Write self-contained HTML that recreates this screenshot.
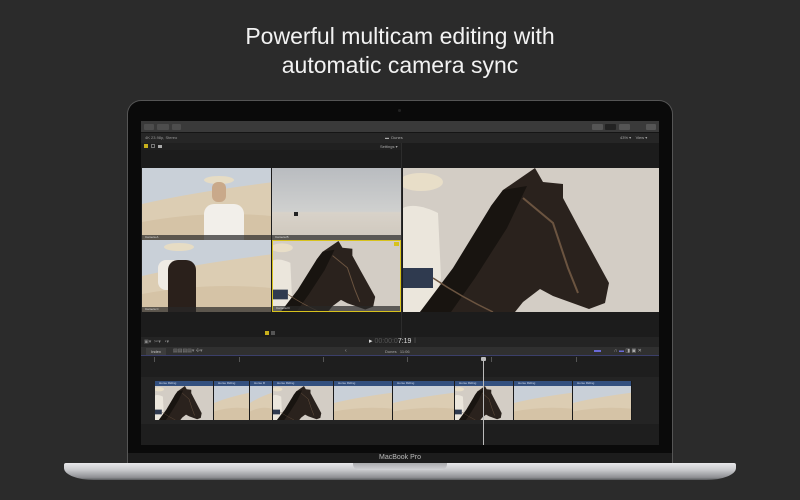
<!DOCTYPE html>
<html><head><meta charset="utf-8"><style>
*{margin:0;padding:0;box-sizing:border-box}
body{width:800px;height:500px;background:#2b2b2b;position:relative;overflow:hidden;font-family:"Liberation Sans",sans-serif}
.a{position:absolute}
h1{position:absolute;left:0;width:800px;text-align:center;color:#f2f2f2;font-weight:300;font-size:23px;line-height:29px;top:22px}
.lbl{position:absolute;left:0;right:0;bottom:0;height:5px;background:rgba(40,40,40,.7);color:#ddd;font-size:3px;padding-left:3px}
.cl{position:absolute;top:381px;height:39px;border-right:1px solid #1a1a1a}
.cl .h{height:5px;background:#33507f;color:#cfd8ea;font-size:3px;padding-left:4px;line-height:5px}
.cl .t{height:34px}
.tick{position:absolute;top:357px;width:1px;height:5px;background:#555}
</style></head><body>
<h1>Powerful multicam editing with<br>automatic camera sync</h1>
<svg width="0" height="0" style="position:absolute"><defs>
<symbol id="horse" viewBox="0 0 256 144" preserveAspectRatio="none">
<rect width="256" height="144" fill="#d3cdc5"/>
<path d="M0 40 C10 35 25 40 35 45 L38 110 L30 144 L0 144Z" fill="#ebe6dc"/>
<ellipse cx="18" cy="14" rx="22" ry="9" fill="#e8dec8"/>
<rect x="0" y="100" width="30" height="20" fill="#2f3a4f"/>
<path d="M17 144 L45 110 L78 62 L88 38 L100 22 L132 0 L140 14 L160 16 L160 30 L176 60 L206 115 L202 135 L186 141 L150 128 L137 121 L120 134 L112 144Z" fill="#2a221d"/>
<path d="M88 38 L100 22 L124 18 L104 60 L72 110 L48 144 L17 144 L50 100Z" fill="#181410"/>
<path d="M120 30 L150 55 L165 100 L175 125" stroke="#6b5440" stroke-width="2" fill="none"/>
<path d="M30 110 Q60 130 90 144" stroke="#6b5440" stroke-width="1.5" fill="none"/>
</symbol>
<symbol id="dune" viewBox="0 0 100 60" preserveAspectRatio="none">
<rect width="100" height="60" fill="#c9d0d8"/>
<path d="M0 30 Q40 20 100 12 L100 60 L0 60Z" fill="#dccdb3"/>
<path d="M0 45 Q50 35 100 40 L100 60 L0 60Z" fill="#d5c3a6"/>
</symbol>
</defs></svg>

<div class="a" style="left:127px;top:100px;width:546px;height:364px;background:#0a0a0a;border-radius:14px 14px 0 0;border:1px solid #555;border-bottom:none"></div>
<div class="a" style="left:398px;top:109px;width:3px;height:3px;border-radius:50%;background:#222"></div>
<div class="a" style="left:141px;top:121px;width:518px;height:324px;background:#1c1c1c"></div>
<div class="a" style="left:141px;top:121px;width:518px;height:12px;background:#3a3a3a;border-bottom:1px solid #151515"></div>
<div class="a" style="left:144px;top:124px;width:10px;height:6px;background:#4d4d4d;border-radius:1px"></div>
<div class="a" style="left:157px;top:124px;width:12px;height:6px;background:#4d4d4d;border-radius:1px"></div>
<div class="a" style="left:172px;top:124px;width:9px;height:6px;background:#4d4d4d;border-radius:1px"></div>
<div class="a" style="left:592px;top:124px;width:11px;height:6px;background:#555;border-radius:1px"></div>
<div class="a" style="left:605px;top:124px;width:11px;height:6px;background:#222;border-radius:1px"></div>
<div class="a" style="left:619px;top:124px;width:11px;height:6px;background:#555;border-radius:1px"></div>
<div class="a" style="left:646px;top:124px;width:10px;height:6px;background:#555;border-radius:1px"></div>
<div class="a" style="left:141px;top:133px;width:518px;height:10px;background:#262626;color:#999;font-size:4px;line-height:10px;padding-left:4px">4K 23.98p, Stereo</div>
<div class="a" style="left:385px;top:133px;color:#aaa;font-size:4px;line-height:10px">▬ &nbsp;Dunes</div>
<div class="a" style="left:620px;top:133px;color:#aaa;font-size:4px;line-height:10px">43% ▾ &nbsp;&nbsp;&nbsp;View ▾</div>
<div class="a" style="left:141px;top:143px;width:260px;height:7px;background:#202020"></div>
<div class="a" style="left:144px;top:144px;width:4px;height:4px;background:#c8b01c"></div>
<div class="a" style="left:151px;top:144px;width:4px;height:4px;border:1px solid #777"></div>
<div class="a" style="left:158px;top:145px;width:4px;height:3px;background:#aaa"></div>
<div class="a" style="left:380px;top:143px;color:#aaa;font-size:4px;line-height:7px">Settings ▾</div>
<div class="a" style="left:401px;top:143px;width:1px;height:194px;background:#2c2c2c"></div>

<div class="a" style="left:142px;top:168px;width:129px;height:72px"><svg width="129" height="72"><use href="#dune"/></svg>
<div class="a" style="left:62px;top:8px;width:30px;height:8px;border-radius:50%;background:#e6dcc4"></div>
<div class="a" style="left:70px;top:14px;width:14px;height:20px;border-radius:6px;background:#c9a98a"></div>
<div class="a" style="left:62px;top:36px;width:40px;height:36px;border-radius:10px 10px 0 0;background:#f2efea"></div>
<div class="lbl">Camera A</div></div>
<div class="a" style="left:272px;top:168px;width:129px;height:72px;background:linear-gradient(#b9bcc0,#cfd0cf 60%,#d8d2c9 62%,#cfc8bd)">
<div class="a" style="left:22px;top:44px;width:4px;height:4px;background:#222"></div>
<div class="lbl">Camera B</div></div>
<div class="a" style="left:142px;top:240px;width:129px;height:72px"><svg width="129" height="72"><use href="#dune"/></svg>
<div class="a" style="left:22px;top:3px;width:30px;height:8px;border-radius:50%;background:#e6dcc4"></div>
<div class="a" style="left:16px;top:20px;width:26px;height:30px;border-radius:8px;background:#efebe4"></div>
<div class="a" style="left:26px;top:20px;width:28px;height:52px;border-radius:10px 10px 0 0;background:#2a201b"></div>
<div class="lbl">Camera C</div></div>
<div class="a" style="left:272px;top:240px;width:129px;height:72px;border:1px solid #d7c21d"><svg width="127" height="70"><use href="#horse"/></svg>
<div class="a" style="right:1px;top:1px;width:5px;height:4px;background:#d7c21d"></div>
<div class="lbl">Camera D</div></div>
<div class="a" style="left:403px;top:168px;width:256px;height:144px"><svg width="256" height="144"><use href="#horse"/></svg></div>

<div class="a" style="left:265px;top:331px;width:4px;height:4px;background:#c8b01c"></div>
<div class="a" style="left:271px;top:331px;width:4px;height:4px;background:#555"></div>
<div class="a" style="left:141px;top:337px;width:518px;height:10px;background:#242424"></div>
<div class="a" style="left:144px;top:339px;color:#888;font-size:5px">▣▾ &nbsp;✂▾ &nbsp;◔▾</div>
<div class="a" style="left:369px;top:338px;color:#ddd;font-size:7px;line-height:8px">▸ <span style="color:#555">00:00:0</span>7:19 <span style="color:#444">‖</span></div>
<div class="a" style="left:141px;top:347px;width:518px;height:9px;background:#303030;border-bottom:1px solid #3b3f6a"></div>
<div class="a" style="left:146px;top:348px;width:20px;height:7px;background:#3d3d3d;color:#ccc;font-size:4px;line-height:7px;text-align:center">Index</div>
<div class="a" style="left:173px;top:348px;color:#888;font-size:5px;line-height:7px">▤▤▤▤▾ ✣▾</div>
<div class="a" style="left:345px;top:348px;color:#aaa;font-size:5px;line-height:7px">‹</div>
<div class="a" style="left:385px;top:348px;color:#aaa;font-size:4px;line-height:7px">Dunes &nbsp;&nbsp;11:06</div>
<div class="a" style="left:594px;top:350px;width:7px;height:2px;background:#6a6ad8"></div>
<div class="a" style="left:614px;top:348px;color:#aaa;font-size:5px;line-height:7px">∩ <span style="color:#6a6ad8">▬</span> ◨ ▣ ✕</div>
<div class="a" style="left:141px;top:356px;width:518px;height:89px;background:#1e1e1e"></div>
<div class="tick" style="left:154px"></div><div class="tick" style="left:239px"></div><div class="tick" style="left:323px"></div><div class="tick" style="left:407px"></div><div class="tick" style="left:491px"></div><div class="tick" style="left:576px"></div>
<div class="a" style="left:141px;top:377px;width:518px;height:47px;background:#242424"></div>
<div class="cl" style="left:155px;width:59px"><div class="h">Horse Riding</div><div class="t"><svg width="58" height="34"><use href="#horse"/></svg></div></div>
<div class="cl" style="left:214px;width:36px"><div class="h">Horse Riding</div><div class="t"><svg width="35" height="34"><use href="#dune"/></svg></div></div>
<div class="cl" style="left:250px;width:23px"><div class="h">Horse R</div><div class="t"><svg width="22" height="34"><use href="#dune"/></svg></div></div>
<div class="cl" style="left:273px;width:61px"><div class="h">Horse Riding</div><div class="t"><svg width="60" height="34"><use href="#horse"/></svg></div></div>
<div class="cl" style="left:334px;width:59px"><div class="h">Horse Riding</div><div class="t"><svg width="58" height="34"><use href="#dune"/></svg></div></div>
<div class="cl" style="left:393px;width:62px"><div class="h">Horse Riding</div><div class="t"><svg width="61" height="34"><use href="#dune"/></svg></div></div>
<div class="cl" style="left:455px;width:59px"><div class="h">Horse Riding</div><div class="t"><svg width="58" height="34"><use href="#horse"/></svg></div></div>
<div class="cl" style="left:514px;width:59px"><div class="h">Horse Riding</div><div class="t"><svg width="58" height="34"><use href="#dune"/></svg></div></div>
<div class="cl" style="left:573px;width:59px"><div class="h">Horse Riding</div><div class="t"><svg width="58" height="34"><use href="#dune"/></svg></div></div>
<div class="a" style="left:483px;top:358px;width:1px;height:87px;background:#bbb"></div>
<div class="a" style="left:481px;top:357px;width:5px;height:4px;background:#bbb;border-radius:1px"></div>
<div class="a" style="left:128px;top:453px;width:544px;height:10px;background:#1c1c1c"></div>
<div class="a" style="left:0;top:453px;width:800px;text-align:center;color:#bbb;font-size:7px;line-height:10px">MacBook Pro</div>
<div class="a" style="left:64px;top:463px;width:672px;height:17px;border-radius:2px 2px 30px 30px/2px 2px 12px 12px;background:linear-gradient(#e8e8ea,#c9cacd 40%,#8e8f93 85%,#5a5b5e)"></div>
<div class="a" style="left:353px;top:463px;width:94px;height:7px;border-radius:0 0 6px 6px;background:linear-gradient(#a9aaad,#d2d3d6)"></div>
</body></html>
